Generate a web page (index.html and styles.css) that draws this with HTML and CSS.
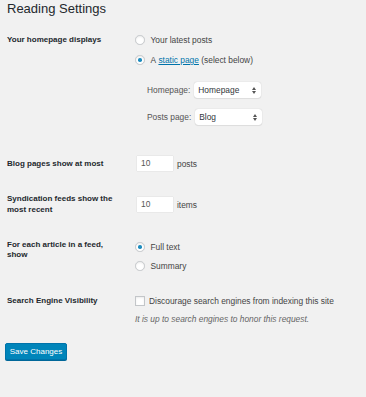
FILE: index.html
```html
<!DOCTYPE html>
<html lang="en">
<head>
  <meta charset="UTF-8" />
  <title>Reading Settings</title>
  <link rel="stylesheet" href="styles.css">
</head>
<body>
  <div class="wrap">
    <h1>Reading Settings</h1>

    <form class="form-table">
      <div class="row row-front">
        <div class="th">Your homepage displays</div>
        <div class="td">
          <label class="line"><span class="radio"></span>Your latest posts</label>
          <label class="line"><span class="radio checked"></span>A&nbsp;<a href="#">static page</a>&nbsp;(select below)</label>
          <div class="pages">
            <div class="page-row">
              <span class="page-label">Homepage:</span>
              <span class="select">Homepage
                <svg class="arrows" width="4" height="7" viewBox="0 0 4 7"><path d="M0 3 L2 0 L4 3 Z M0 4 L4 4 L2 7 Z" fill="#555"/></svg>
              </span>
            </div>
            <div class="page-row">
              <span class="page-label">Posts page:</span>
              <span class="select">Blog
                <svg class="arrows" width="4" height="7" viewBox="0 0 4 7"><path d="M0 3 L2 0 L4 3 Z M0 4 L4 4 L2 7 Z" fill="#555"/></svg>
              </span>
            </div>
          </div>
        </div>
      </div>

      <div class="row row-posts">
        <div class="th th-inline">Blog pages show at most</div>
        <div class="td"><span class="num">10</span><span class="unit">posts</span></div>
      </div>

      <div class="row row-feed">
        <div class="th th-two">Syndication feeds show the most recent</div>
        <div class="td td-feed"><span class="num">10</span><span class="unit">items</span></div>
      </div>

      <div class="row row-article">
        <div class="th th-two th-article">For each article in a feed, show</div>
        <div class="td td-article">
          <label class="line"><span class="radio checked"></span>Full text</label>
          <label class="line"><span class="radio"></span>Summary</label>
        </div>
      </div>

      <div class="row row-seo">
        <div class="th">Search Engine Visibility</div>
        <div class="td">
          <label class="line"><span class="check"></span>Discourage search engines from indexing this site</label>
          <p class="description">It is up to search engines to honor this request.</p>
        </div>
      </div>
    </form>

    <button class="button-primary">Save Changes</button>
  </div>
</body>
</html>
```

FILE: styles.css
```css
body {
  margin: 0;
  background: #f1f1f1;
  font-family: 'Liberation Sans', Arial, sans-serif;
  font-size: 8.4px;
  color: #444;
}

.wrap {
  padding-left: 7px;
  width: 359px;
  height: 397px;
  overflow: hidden;
}

h1 {
  margin: 0;
  font-size: 13px;
  font-weight: normal;
  line-height: 17px;
  color: #23282d;
}

.row {
  display: grid;
  grid-template-columns: 128px 1fr;
  align-items: start;
}

.th {
  font-size: 8px;
  font-weight: bold;
  color: #23282d;
  line-height: 10px;
  padding-right: 12px;
}

.row-front {
  margin-top: 14px;
}

.row-front .th,
.row-front .td {
  padding-top: 4px;
}

.line {
  display: flex;
  align-items: center;
  height: 10px;
  margin-bottom: 10px;
  white-space: nowrap;
}

.line a {
  color: #0073aa;
}

.radio {
  flex: none;
  width: 9.5px;
  height: 9.5px;
  box-sizing: border-box;
  border: 1px solid #c3c6c9;
  border-radius: 50%;
  background: #fff;
  box-shadow: inset 0 1px 2px rgba(0,0,0,0.08);
  margin-right: 6px;
  display: flex;
  align-items: center;
  justify-content: center;
}

.radio.checked::before {
  content: "";
  width: 3.5px;
  height: 3.5px;
  border-radius: 50%;
  background: #1e8cbe;
}

.check {
  flex: none;
  width: 9.5px;
  height: 9.5px;
  box-sizing: border-box;
  border: 1px solid #c3c6c9;
  background: #fff;
  box-shadow: inset 0 1px 2px rgba(0,0,0,0.08);
  margin-right: 4.5px;
}

.pages {
  margin-top: 17px;
  padding-left: 12px;
}

.page-row {
  display: flex;
  align-items: center;
  height: 16px;
  margin-bottom: 11px;
}

.page-label {
  color: #555;
  margin-right: 4px;
}

.select {
  position: relative;
  width: 67px;
  height: 16px;
  box-sizing: border-box;
  background: #fff;
  border-radius: 3px;
  box-shadow: 0 0 1px rgba(0,0,0,0.25), 0 1px 1px rgba(0,0,0,0.06);
  display: flex;
  align-items: center;
  padding-left: 4px;
  color: #32373c;
}

.arrows {
  position: absolute;
  right: 5px;
  top: 4.5px;
}

.row-posts {
  margin-top: 20px;
}

.th-inline {
  line-height: 15px;
}

.num {
  display: inline-block;
  width: 36px;
  height: 15px;
  line-height: 15px;
  box-sizing: border-box;
  padding-left: 4px;
  background: #fff;
  box-shadow: 0 0 1px rgba(0,0,0,0.2);
  color: #555;
  margin-left: 2px;
  margin-right: 4px;
  vertical-align: middle;
}

.unit {
  vertical-align: middle;
}

.row-feed {
  margin-top: 22px;
}

.th-two {
  line-height: 11px;
}

.td-feed {
  padding-top: 4px;
}

.row-article {
  margin-top: 25px;
}

.th-article {
  line-height: 10px;
}

.td-article {
  padding-top: 2px;
}

.td-article .line {
  margin-bottom: 9px;
}

.row-seo {
  margin-top: 16px;
}

.row-seo .line {
  margin-bottom: 8px;
}

.description {
  margin: 0;
  font-style: italic;
  color: #666;
  line-height: 10px;
}

.button-primary {
  display: block;
  margin: 19px 0 0 -2px;
  width: 62px;
  height: 17px;
  padding: 0;
  border: 1px solid #0073aa;
  border-radius: 2px;
  background: #0085ba;
  box-shadow: 0 1px 0 #006799;
  color: #fff;
  font-family: 'Liberation Sans', Arial, sans-serif;
  font-size: 8px;
}
```
